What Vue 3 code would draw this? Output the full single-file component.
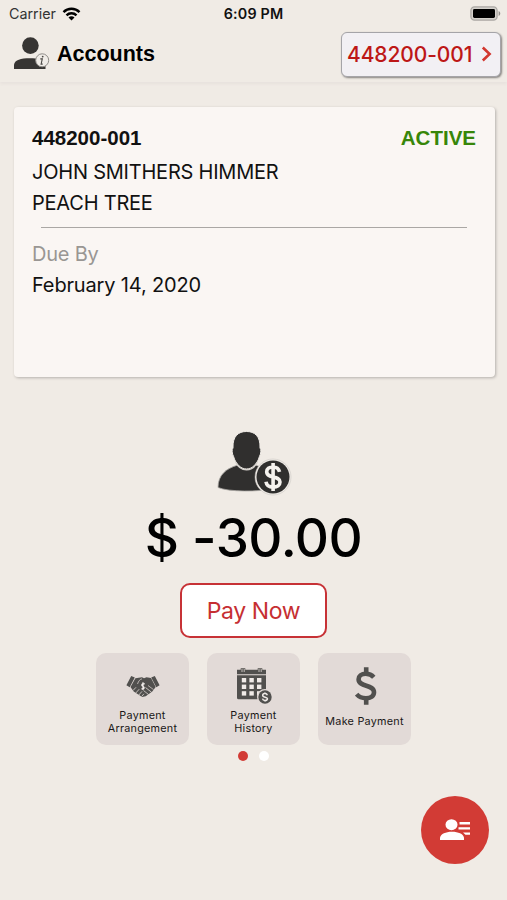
<template>
  <div class="screen">
    <div class="status-bar">
      <div class="carrier">
        <span>Carrier</span>
        <svg class="wifi" viewBox="0 0 18 14" fill="none" stroke="#000" stroke-width="2.4">
          <path d="M1 5.1a11.3 11.3 0 0 1 16 0" />
          <path d="M4 8.3a7.1 7.1 0 0 1 10 0" />
          <path d="M9 13.6 6 10.6a4.2 4.2 0 0 1 6 0z" fill="#000" stroke="none" />
        </svg>
      </div>
      <div class="time">6:09 PM</div>
      <svg class="battery" viewBox="0 0 31 15">
        <rect x=".9" y=".9" width="26.2" height="13.2" rx="3.6" fill="#d5d1cc" stroke="#aaa7a3" stroke-width="1.3" />
        <rect x="3" y="3" width="22" height="9" rx="1.4" fill="#000" />
        <path d="M28.6 5v5c2.2-.8 2.2-4.2 0-5z" fill="#918e8a" />
      </svg>
    </div>

    <header class="header">
      <svg class="user-info" viewBox="0 0 37 34">
        <circle cx="17.4" cy="8.6" r="8.3" fill="#373533" />
        <path d="M1 32v-4.500C2 23 7.500 21.300 17 21.300c8 0 13 1.700 15.500 4.700v6z" fill="#373533" />
        <circle cx="29.200" cy="23.300" r="6.500" fill="#f0ece7" stroke="#8e8b87" />
        <path d="M27.300 21.900h2l-1.200 5.200h1.600" fill="none" stroke="#4a4845" stroke-width="1.100" />
        <circle cx="29.700" cy="19.600" r=".9" fill="#4a4845" />
      </svg>
      <h1 class="title">Accounts</h1>
      <button class="account-picker">
        <span>{{ account.number }}</span>
        <svg class="chevron" viewBox="0 0 11 16" fill="none" stroke="#d2372f" stroke-width="2.6">
          <path d="M1.800 1.500 8.600 8l-6.800 6.500" />
        </svg>
      </button>
    </header>

    <section class="card">
      <div class="card-top">
        <span class="card-number">{{ account.number }}</span>
        <span class="card-status">{{ account.status }}</span>
      </div>
      <div class="card-line name">{{ account.name }}</div>
      <div class="card-line place">{{ account.place }}</div>
      <div class="divider"></div>
      <div class="card-line due-label">Due By</div>
      <div class="card-line due-date">{{ account.dueDate }}</div>
    </section>

    <section class="balance">
      <svg class="user-money" viewBox="0 0 76 66">
        <path d="M2 56.500C2 44 10 37.500 22 34h17c10 2.500 16 9 16 23.500-10 3.500-43 3.500-53-1z" fill="#302f2e" stroke="#aaa7a3" stroke-width=".8" />
        <path d="M17 17C16.500 5 22.500 .5 30.500 .5S44.500 5 44 17c1.400 1 1 6-.6 8.500C41.500 33 36 38 30.500 38S19.500 33 17.600 25.500C16 23 15.600 18 17 17z" fill="#302f2e" stroke="#f0ece7" stroke-width="1" />
        <path d="M19.800 31C22 36 26 38.700 30.500 38.700S39 36 41.200 31" fill="none" stroke="#d5d1cc" stroke-width="1.600" />
        <circle cx="57" cy="46" r="18" fill="#f0ece7" stroke="#c5c1bd" stroke-width=".5" />
        <circle cx="57" cy="46" r="16.500" fill="#302f2e" />
        <path d="M63.500 40.800c-.8-3.400-3.200-4.800-6.500-4.800-3.800 0-6.300 1.800-6.300 4.800 0 7 13.300 3.300 13.300 10.200 0 3.200-2.800 5.100-6.800 5.100-4 0-6.700-1.900-7.200-5.400M57.100 32v28" fill="none" stroke="#f5f2ee" stroke-width="3.600" />
      </svg>
      <div class="amount">$ -30.00</div>
      <button class="pay-now">Pay Now</button>
    </section>

    <nav class="tiles">
      <button v-for="tile in tiles" :key="tile.id" class="tile" :class="tile.id">
        <svg v-if="tile.id === 'arrangement'" class="icon-handshake" viewBox="0 0 34 22">
          <path d="M5.200 0 .4 9.300l3.300 1.900L8.800 1.600zM28.800 0l4.800 9.300-3.300 1.900-5.100-9.600z" fill="#51504e" />
          <path d="M9.400 2.200 16 1.300l2 .9 2.500-.9 4.500.8 4.700 9-3.400 4.300-6.600 4.800-3.600.9-8.400-5.600-3.200-4.400z" fill="#51504e" />
          <path d="M16 2.800c-2 .4-3.500 2.200-4.500 5.200M22 9.500l5.500 4.100" fill="none" stroke="#e2dad7" stroke-width=".7" />
          <path d="m19.500 11.500 6 4.700M17.500 14.500l5 4M7 14.500l3-3.200M9.800 17l3.400-3.800M12.800 19l3.200-3.600M15.700 20.500l2.200-2.700" fill="none" stroke="#e2dad7" stroke-width=".8" />
          <path d="M18.800 8c-2.500-1.200-4.200 1.300-2 2.300 2.400 1 1.400 3.400-1.300 2.300M17 6.300v7.600" fill="none" stroke="#f3efed" stroke-width="1.200" />
        </svg>
        <svg v-else-if="tile.id === 'history'" class="icon-calendar" viewBox="0 0 36 36">
          <path d="M1 1.800h29v4.400H1zM1 7.300h29V24l-8 7.300H2.500Q1 31.300 1 29.800z" fill="#51504e" />
          <path d="M7 .3v3.200M24 .3v3.200" stroke="#51504e" stroke-width="4.600" />
          <path d="M6 1v3M8.200 1v3M23 1v3M25.200 1v3" stroke="#e2dad7" stroke-width=".8" />
          <path
            v-for="cell in calendarCells"
            :key="cell.x + '-' + cell.y"
            :d="`M${cell.x} ${cell.y}h4.400v4.400h-4.400z`"
            fill="#f0ebe8"
          />
          <circle cx="29" cy="29" r="8" fill="#e2dad7" />
          <circle cx="29" cy="29" r="6.700" fill="#51504e" />
          <path d="M31.300 27.200c-.6-2.400-4.600-2.200-4.600.1 0 2.700 4.800 1 4.800 3.500 0 2.100-4.500 2.200-5-.2" fill="none" stroke="#f0ebe8" stroke-width="1.500" />
          <path d="M29 24.500v1.500M29 32v1.500" stroke="#f0ebe8" stroke-width="1.300" />
        </svg>
        <svg v-else class="icon-dollar" viewBox="0 0 22 38" fill="none" stroke="#51504e">
          <path d="M18.800 10.200C16.800 8 14 6.800 10.800 6.800c-4.400 0-7.200 2-7.200 5.400 0 8.300 15.400 4.700 15.400 13 0 3.700-3.200 6-8.100 6-3.800 0-7-1.300-9.300-4" stroke-width="4.600" />
          <path d="M11.200.3v6.500M11.200 31.200v6.500" stroke-width="4.600" />
        </svg>
        <span class="tile-label">{{ tile.label }}</span>
      </button>
    </nav>

    <div class="dots">
      <span class="dot active"></span>
      <span class="dot"></span>
    </div>

    <button class="fab">
      <svg viewBox="0 0 30 22" fill="#fff">
        <ellipse cx="11.500" cy="5.700" rx="6" ry="5.500" />
        <path d="M0 21v-2.500C1 15 5.500 12.800 12 12.800s11 2.200 12 5.700V21z" />
        <path d="M19.500 3H30v2.400H19.500zM18.500 8.200H30v2.400H18.500zM23 13.400h7v2.400h-4.500z" />
      </svg>
    </button>
  </div>
</template>

<script setup>
import { ref } from 'vue'

const account = ref({
  number: '448200-001',
  status: 'ACTIVE',
  name: 'JOHN SMITHERS HIMMER',
  place: 'PEACH TREE',
  dueDate: 'February 14, 2020'
})

const tiles = [
  { id: 'arrangement', label: 'Payment Arrangement' },
  { id: 'history', label: 'Payment History' },
  { id: 'make', label: 'Make Payment' }
]

// 3 columns x 3 rows of days
const calendarCells = [10, 16.6, 23.2].flatMap(y =>
  [5.8, 13.4, 21].map(x => ({ x, y }))
)
</script>

<style>
body {
  background: #f0ebe5;
}
</style>

<style scoped>
.screen {
  position: relative;
  display: flex;
  flex-direction: column;
  width: 507px;
  height: 900px;
  overflow: hidden;
  background: #f0ebe5;
  color: #111;
  font-family: Inter, 'Liberation Sans', sans-serif;
}

button {
  margin: 0;
  padding: 0;
  font-family: inherit;
  box-sizing: border-box;
}

.status-bar {
  display: grid;
  grid-template-columns: 1fr auto 1fr;
  align-items: center;
  height: 27px;
  padding: 0 6px 0 9px;
}

.carrier {
  display: flex;
  align-items: center;
  gap: 6px;
  font-size: 14.3px;
  color: #333;
}

.wifi {
  width: 19px;
  height: 14px;
}

.time {
  margin-right: 3px;
  font-size: 14.3px;
  font-weight: 600;
  letter-spacing: 0.2px;
}

.battery {
  width: 31px;
  height: 15px;
  justify-self: end;
}

.header {
  display: flex;
  align-items: center;
  height: 55px;
  padding: 0 6px 1px 13px;
  box-sizing: border-box;
  box-shadow: 0 2px 3px rgba(100, 90, 110, 0.06);
}

.user-info {
  width: 37px;
  height: 34px;
}

.title {
  flex: 1;
  margin: 0 0 0 7px;
  font-family: 'Liberation Sans', Arial, sans-serif;
  font-size: 21.5px;
  line-height: 26px;
  color: #000;
}

.account-picker {
  display: flex;
  align-items: center;
  justify-content: space-between;
  width: 160px;
  height: 45px;
  padding: 0 8px 0 5px;
  border: 1.5px solid #a5a4a8;
  border-radius: 6px;
  background: #f2f0f4;
  box-shadow: 1px 1px 2px rgba(0, 0, 0, 0.45);
  color: #bd1717;
  font-size: 21px;
  font-weight: 500;
  letter-spacing: -0.1px;
}

.chevron {
  width: 11px;
  height: 16px;
}

.card {
  height: 270px;
  margin: 25px 12px 0 14px;
  padding: 16px 19px 0 18px;
  box-sizing: border-box;
  border-radius: 4px;
  background: #faf6f3;
  box-shadow: 1px 1px 3px rgba(0, 0, 0, 0.25);
}

.card-top {
  display: flex;
  justify-content: space-between;
  font-family: 'Liberation Sans', Arial, sans-serif;
  font-size: 20.5px;
  font-weight: bold;
  line-height: 30px;
}

.card-status {
  color: #378609;
}

.card-line {
  font-size: 20px;
  line-height: 31px;
  letter-spacing: -0.22px;
  white-space: nowrap;
}

.name {
  margin-top: 4px;
}

.divider {
  height: 1px;
  margin: 8px 9px 11px;
  background: #aaa7a4;
}

.due-label {
  color: #999693;
}

.due-date {
  letter-spacing: -0.15px;
}

.balance {
  display: flex;
  flex-direction: column;
  align-items: center;
  padding-top: 54px;
}

.user-money {
  width: 76px;
  height: 66px;
}

.amount {
  margin-top: 9px;
  font-size: 53px;
  font-weight: 500;
  line-height: 64px;
  letter-spacing: -0.5px;
  color: #000;
}

.pay-now {
  width: 147px;
  height: 55px;
  margin-top: 12.5px;
  border: 2px solid #c73236;
  border-radius: 10px;
  background: #fff;
  color: #c62f32;
  font-size: 23px;
  letter-spacing: -0.4px;
  padding-top: 1px;
}

.tiles {
  display: flex;
  justify-content: center;
  gap: 18px;
  margin-top: 15.5px;
}

.tile {
  display: flex;
  flex-direction: column;
  align-items: center;
  width: 93px;
  height: 92px;
  border: 0;
  border-radius: 10px;
  background: #e2dad7;
}

.tile-label {
  max-width: 82px;
  font-size: 10.8px;
  line-height: 13px;
  letter-spacing: 0.25px;
  color: #191716;
}

.icon-handshake {
  width: 34px;
  height: 22px;
  margin: 23px 0 11px;
}

.icon-calendar {
  width: 36px;
  height: 36px;
  margin: 15px 0 5px;
}

.icon-dollar {
  width: 22px;
  height: 38px;
  margin: 14px 0 10px 2px;
}

.dots {
  display: flex;
  justify-content: center;
  gap: 11px;
  margin-top: 6px;
}

.dot {
  width: 10px;
  height: 10px;
  border-radius: 50%;
  background: #fff;
}

.dot.active {
  background: #d23b35;
}

.fab {
  position: absolute;
  right: 18px;
  bottom: 36px;
  display: flex;
  align-items: center;
  justify-content: center;
  width: 68px;
  height: 68px;
  border: 0;
  border-radius: 50%;
  background: #d23b35;
}

.fab svg {
  width: 30px;
  height: 22px;
}
</style>
